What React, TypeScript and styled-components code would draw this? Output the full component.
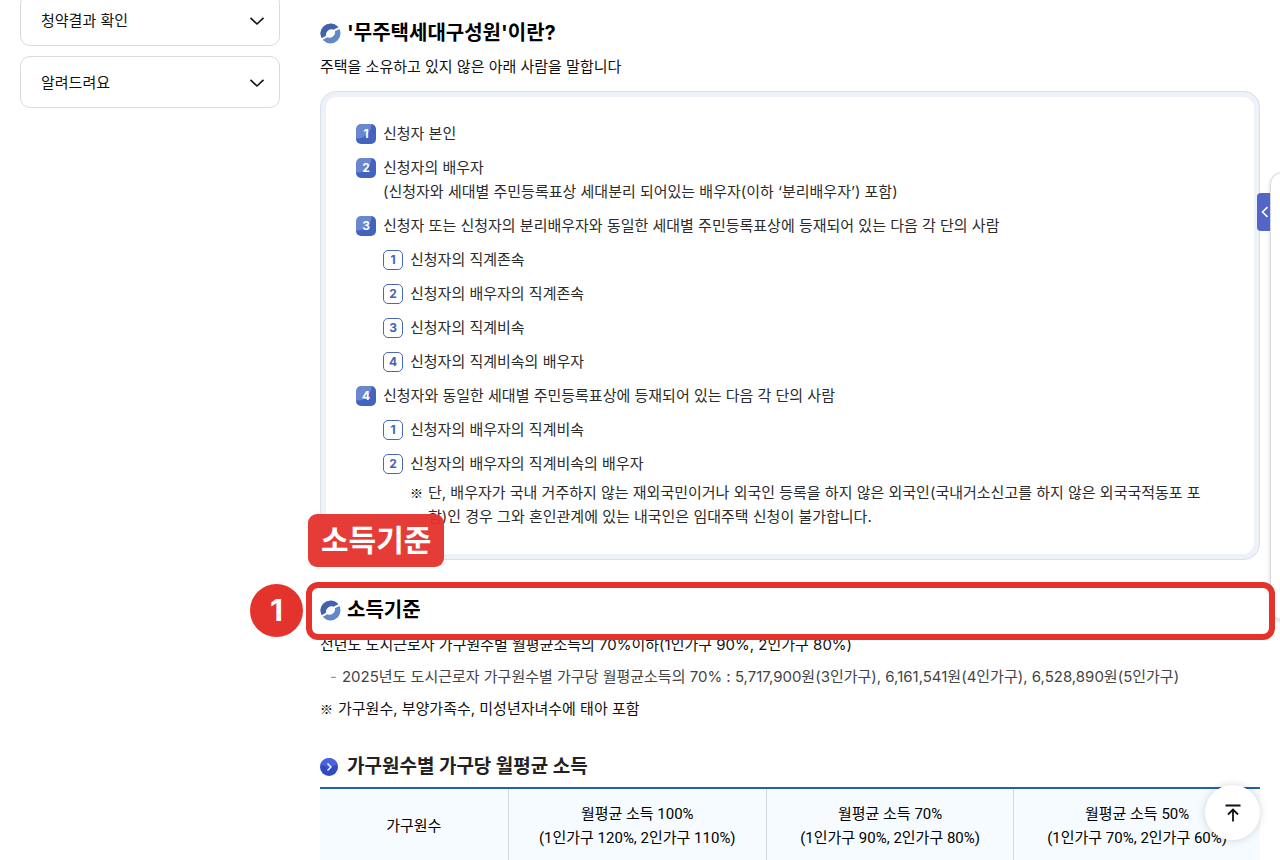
import React from "react";
import styled, { createGlobalStyle, css } from "styled-components";

const GlobalStyle = createGlobalStyle`
  * { box-sizing: border-box; }
  html, body { margin: 0; padding: 0; background: #fff; }
  body, button {
    font-family: Inter, "Noto Sans CJK KR", sans-serif;
    font-size: 15px;
    line-height: 24px;
    color: #111;
  }
  h2, h3, p, ol { margin: 0; padding: 0; }
  ol { list-style: none; }
`;

const Page = styled.div`
  display: grid;
  grid-template-columns: 260px minmax(0, 1fr);
  gap: 40px;
  height: 100vh;
  padding: 0 20px;
  overflow: hidden;
`;

const Sidebar = styled.nav`
  display: flex;
  flex-direction: column;
  gap: 10px;
  margin-top: -6px;
`;

const MenuButton = styled.button`
  display: flex;
  align-items: center;
  justify-content: space-between;
  height: 52px;
  padding: 1px 14px 0 20px;
  border: 1px solid #d9dadd;
  border-radius: 10px;
  background: #fff;
  cursor: pointer;
`;

const Main = styled.main`
  padding-top: 18px;
`;

const SectionTitle = styled.h2`
  display: flex;
  align-items: center;
  gap: 6px;
  font-size: 20px;
  line-height: 30px;
  font-weight: 700;
  color: #000;
`;

const Lead = styled.p`
  padding-top: 7px;
`;

const DefinitionBox = styled.section`
  margin-top: 12px;
  border: 1px solid #dae0e8;
  border-radius: 16px;
  background: #edf2f8;
  padding: 5px;
`;

const DefinitionInner = styled.div`
  padding: 25px 30px;
  border-radius: 11px;
  background: #fff;
  color: #2b2b2b;
`;

const List = styled.ol`
  display: flex;
  flex-direction: column;
  gap: 10px;
`;

const SubList = styled(List)`
  padding-top: 10px;
`;

const Item = styled.li`
  display: flex;
  align-items: flex-start;
  gap: 7px;
`;

const ItemBody = styled.div`
  flex: 1;
  min-width: 0;
`;

const Badge = styled.span<{ $outlined?: boolean }>`
  flex: none;
  display: flex;
  align-items: center;
  justify-content: center;
  width: 20px;
  height: 20px;
  margin-top: 2px;
  border-radius: 5px;
  font-size: 12px;
  line-height: 18px;
  font-weight: 700;
  ${(p) =>
    p.$outlined
      ? css`
          border: 1px solid #4a69b5;
          color: #4463b5;
        `
      : css`
          background: radial-gradient(circle at 1px 0, #6b87d0 14px, #4364be 15px);
          color: #fff;
        `}
`;

const Note = styled.p`
  display: flex;
  gap: 6px;
  padding-top: 5px;
`;

const NoteMark = styled.span`
  flex: none;
  width: 12px;
  font-family: "Noto Sans CJK KR", sans-serif;
  font-size: 13px;
  color: #000;
`;

const Line = styled.span`
  display: block;
`;

const Highlight = styled.div`
  position: relative;
  margin-top: 35px;
`;

const HighlightFrame = styled.div`
  position: absolute;
  inset: -13px -15px -15px -14px;
  border: 6px solid #e4322c;
  border-radius: 12px;
  z-index: 3;
`;

const HighlightLabel = styled.div`
  position: absolute;
  left: -12px;
  bottom: 58px;
  padding: 4px 13px;
  border-radius: 9px;
  background: rgba(229, 50, 45, 0.95);
  color: #fff;
  font-size: 30px;
  line-height: 45px;
  font-weight: 600;
  white-space: nowrap;
  z-index: 3;
`;

const HighlightNumber = styled.div`
  position: absolute;
  left: -70px;
  top: -11px;
  width: 53px;
  height: 53px;
  border-radius: 50%;
  background: #e4322c;
  color: #fff;
  font-size: 30px;
  line-height: 53px;
  font-weight: 700;
  text-align: center;
`;

const Criteria = styled.div`
  display: flex;
  flex-direction: column;
  gap: 8px;
  padding-top: 8px;
`;

const Dashed = styled.p`
  display: flex;
  gap: 5px;
  padding-left: 10px;
  color: #444;
  &::before {
    content: "-";
    color: #8c95a8;
  }
`;

const PlainNote = styled.p`
  display: flex;
  gap: 6px;
`;

const SubTitle = styled.h3`
  display: flex;
  align-items: center;
  gap: 9px;
  margin-top: 32px;
  font-size: 19px;
  line-height: 28px;
  font-weight: 700;
  color: #222;
`;

const IncomeTable = styled.table`
  width: 100%;
  margin-top: 6px;
  border-collapse: collapse;
  table-layout: fixed;
  border-top: 2px solid #2163a8;
`;

const Column = styled.col<{ $share: number }>`
  width: ${(p) => p.$share}%;
`;

const HeadCell = styled.th`
  height: 74px;
  padding: 0;
  background: #f6fbff;
  font-family: Roboto, "Noto Sans CJK KR", sans-serif;
  font-weight: 400;
  line-height: 24px;
  color: #000;
  & + & {
    border-left: 1px solid #d3d9e0;
  }
`;

const QuickPanel = styled.aside`
  position: fixed;
  top: 172px;
  right: -90px;
  width: 100px;
  height: 448px;
  border: 1px solid #d6d6d8;
  border-radius: 12px;
  background: #fff;
  box-shadow: 0 2px 4px rgba(0, 0, 0, 0.15);
  z-index: 1;
`;

const QuickHandle = styled.button`
  position: absolute;
  left: -14px;
  top: 20px;
  display: flex;
  align-items: center;
  justify-content: flex-end;
  width: 13px;
  height: 38px;
  padding: 0 1px;
  border: 0;
  border-radius: 4px 0 0 4px;
  background: #5365c8;
  cursor: pointer;
`;

const TopButton = styled.button`
  position: fixed;
  right: 20px;
  bottom: 20px;
  display: flex;
  align-items: center;
  justify-content: center;
  width: 55px;
  height: 55px;
  padding: 0;
  border: 0;
  border-radius: 50%;
  background: #fff;
  box-shadow: 0 0 8px rgba(0, 0, 0, 0.16);
  cursor: pointer;
  z-index: 2;
`;

const ChevronDown = () => (
  <svg width="16" height="16" viewBox="0 0 16 16" fill="none" stroke="#111" strokeWidth="1.6" aria-hidden="true">
    <path d="M1.5 4.8 8 11l6.5-6.2" />
  </svg>
);

const RingIcon = () => (
  <svg width="21" height="21" viewBox="0 0 21 21" aria-hidden="true">
    <circle cx="10.5" cy="10.5" r="10" fill="#6288c7" />
    <path d="M1.900 15.600A10 10 0 0 1 18.700 4.800L10.500 10.500Z" fill="#4262ab" />
    <path d="M0 16.800C4 15.600 7 13.500 10.500 10.500S17 5.600 21 4.200" fill="none" stroke="#fff" strokeWidth="1.800" />
    <ellipse cx="10.500" cy="10.500" rx="5" ry="3.800" transform="rotate(-38 10.5 10.5)" fill="#fff" />
  </svg>
);

const ArrowBullet = () => (
  <svg width="18" height="18" viewBox="0 0 18 18" aria-hidden="true">
    <circle cx="9" cy="9" r="9" fill="#2f49c8" />
    <path d="M.4 6.500A9 9 0 0 1 17.600 6.500L9 9.500Z" fill="#4c63dc" />
    <path d="M7.500 5.500 11 9l-3.500 3.500" fill="none" stroke="#fff" strokeWidth="1.400" />
  </svg>
);

const MenuEntry = ({ label }: { label: string }) => (
  <MenuButton type="button" aria-expanded="false">
    {label}
    <ChevronDown />
  </MenuButton>
);

const Entry = ({ n, outlined, children }: { n: number; outlined?: boolean; children: React.ReactNode }) => (
  <Item>
    <Badge $outlined={outlined}>{n}</Badge>
    <ItemBody>{children}</ItemBody>
  </Item>
);

const ancestors = ["신청자의 직계존속", "신청자의 배우자의 직계존속", "신청자의 직계비속", "신청자의 직계비속의 배우자"];

const incomeColumns = [
  ["월평균 소득 100%", "(1인가구 120%, 2인가구 110%)"],
  ["월평균 소득 70%", "(1인가구 90%, 2인가구 80%)"],
  ["월평균 소득 50%", "(1인가구 70%, 2인가구 60%)"],
];

export default function App() {
  return (
    <>
      <GlobalStyle />
      <Page>
        <Sidebar>
          <MenuEntry label="청약결과 확인" />
          <MenuEntry label="알려드려요" />
        </Sidebar>
        <Main>
          <SectionTitle>
            <RingIcon />
            '무주택세대구성원'이란?
          </SectionTitle>
          <Lead>주택을 소유하고 있지 않은 아래 사람을 말합니다</Lead>
          <DefinitionBox>
            <DefinitionInner>
              <List>
                <Entry n={1}>신청자 본인</Entry>
                <Entry n={2}>
                  <Line>신청자의 배우자</Line>
                  <Line>(신청자와 세대별 주민등록표상 세대분리 되어있는 배우자(이하 ‘분리배우자’) 포함)</Line>
                </Entry>
                <Entry n={3}>
                  신청자 또는 신청자의 분리배우자와 동일한 세대별 주민등록표상에 등재되어 있는 다음 각 단의 사람
                  <SubList>
                    {ancestors.map((text, i) => (
                      <Entry key={text} n={i + 1} outlined>
                        {text}
                      </Entry>
                    ))}
                  </SubList>
                </Entry>
                <Entry n={4}>
                  신청자와 동일한 세대별 주민등록표상에 등재되어 있는 다음 각 단의 사람
                  <SubList>
                    <Entry n={1} outlined>신청자의 배우자의 직계비속</Entry>
                    <Entry n={2} outlined>
                      신청자의 배우자의 직계비속의 배우자
                      <Note>
                        <NoteMark>※</NoteMark>
                        <span>
                          <Line>단, 배우자가 국내 거주하지 않는 재외국민이거나 외국인 등록을 하지 않은 외국인(국내거소신고를 하지 않은 외국국적동포 포</Line>
                          <Line>함)인 경우 그와 혼인관계에 있는 내국인은 임대주택 신청이 불가합니다.</Line>
                        </span>
                      </Note>
                    </Entry>
                  </SubList>
                </Entry>
              </List>
            </DefinitionInner>
          </DefinitionBox>

          <Highlight>
            <SectionTitle>
              <RingIcon />
              소득기준
            </SectionTitle>
            <HighlightFrame />
            <HighlightLabel>소득기준</HighlightLabel>
            <HighlightNumber>1</HighlightNumber>
          </Highlight>
          <Criteria>
            <p>전년도 도시근로자 가구원수별 월평균소득의 70%이하(1인가구 90%, 2인가구 80%)</p>
            <Dashed>
              2025년도 도시근로자 가구원수별 가구당 월평균소득의 70% : 5,717,900원(3인가구), 6,161,541원(4인가구), 6,528,890원(5인가구)
            </Dashed>
            <PlainNote>
              <NoteMark>※</NoteMark>
              가구원수, 부양가족수, 미성년자녀수에 태아 포함
            </PlainNote>
          </Criteria>

          <SubTitle>
            <ArrowBullet />
            가구원수별 가구당 월평균 소득
          </SubTitle>
          <IncomeTable>
            <colgroup>
              <Column $share={20} />
              <Column $share={27.5} />
              <Column $share={26.3} />
              <Column $share={26.2} />
            </colgroup>
            <thead>
              <tr>
                <HeadCell scope="col">가구원수</HeadCell>
                {incomeColumns.map(([title, detail]) => (
                  <HeadCell scope="col" key={title}>
                    <Line>{title}</Line>
                    <Line>{detail}</Line>
                  </HeadCell>
                ))}
              </tr>
            </thead>
          </IncomeTable>
        </Main>
      </Page>
      <QuickPanel>
        <QuickHandle type="button" aria-label="퀵메뉴 열기">
          <svg width="8" height="12" viewBox="0 0 8 12" fill="none" stroke="#fff" strokeWidth="1.600" aria-hidden="true">
            <path d="M6.500 1.200 1.500 6l5 4.800" />
          </svg>
        </QuickHandle>
      </QuickPanel>
      <TopButton type="button" aria-label="맨 위로">
        <svg width="18" height="20" viewBox="0 0 18 20" fill="none" stroke="#111" strokeWidth="1.800" aria-hidden="true">
          <path d="M1.500 2.500h15M9 18.500V6.500M4 11.500l5-5 5 5" />
        </svg>
      </TopButton>
    </>
  );
}
